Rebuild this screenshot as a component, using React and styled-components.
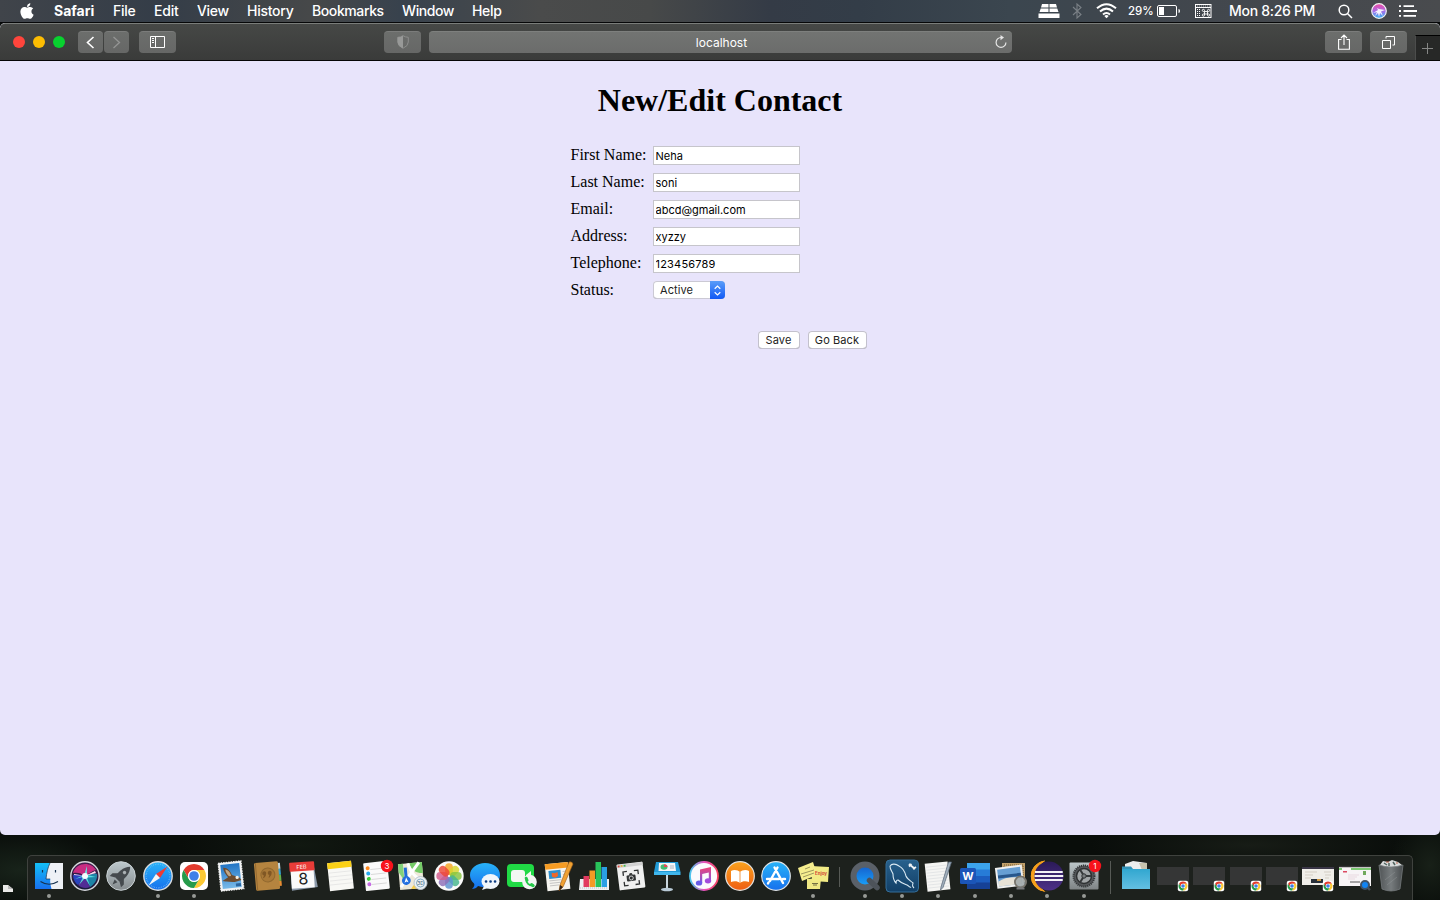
import React from "react";
import styled, { createGlobalStyle, css } from "styled-components";
import { FaApple } from "react-icons/fa";

const GlobalStyle = createGlobalStyle`
  * { box-sizing: border-box; }
  html, body { margin: 0; padding: 0; background: #0b0f0c; overflow: hidden; }
`;

const uiFont = css`
  font-family: Inter, "Liberation Sans", sans-serif;
`;

const Desktop = styled.div`
  width: 1440px;
  height: 900px;
  display: flex;
  flex-direction: column;
  background:
    radial-gradient(ellipse 90px 40px at 20px 870px, #18231a, transparent),
    radial-gradient(ellipse 120px 30px at 300px 845px, #111811, transparent),
    radial-gradient(ellipse 160px 26px at 1250px 845px, #171c16, transparent),
    radial-gradient(ellipse 40px 50px at 1430px 865px, #182018, transparent),
    #090d0a;
  ${uiFont}
`;

/* ---------- Menu bar ---------- */

const MenuBar = styled.header`
  flex: none;
  height: 23px;
  display: flex;
  align-items: center;
  padding: 0 23px 0 21px;
  border-bottom: 1px solid #060708;
  color: #fff;
  background: linear-gradient(
    90deg, #40444a 0, #343d48 160px, #464849 310px, #38424d 400px, #4a4b4b 540px,
    #474949 650px, #343b46 770px, #333d48 860px, #3b464f 1010px, #40464d 1150px, #494b4e 1440px
  );
  svg { display: block; }
`;

const AppleItem = styled.span`
  width: 33px;
  display: flex;
  padding-bottom: 1px;
`;

const MenuItem = styled.span`
  width: ${(p) => p.$width}px;
  font-size: 14px;
  line-height: 22px;
  font-weight: ${(p) => (p.$strong ? 700 : 500)};
  letter-spacing: ${(p) => p.$track || 0}px;
  white-space: nowrap;
`;

const StatusGroup = styled.div`
  margin-left: auto;
  display: flex;
  align-items: center;
`;

const StatusItem = styled.span`
  width: ${(p) => p.$width}px;
  margin-left: ${(p) => p.$gap || 0}px;
  display: flex;
  font-size: ${(p) => p.$size || 14}px;
  line-height: 22px;
  font-weight: 500;
  letter-spacing: ${(p) => p.$track || 0}px;
  white-space: nowrap;
`;

/* ---------- Browser window ---------- */

const BrowserWindow = styled.main`
  flex: none;
  height: 812px;
  display: flex;
  flex-direction: column;
  border-radius: 5px;
  overflow: hidden;
  background: #e8e4fb;
`;

const Toolbar = styled.div`
  flex: none;
  height: 38px;
  display: flex;
  align-items: flex-start;
  padding: 7px 0 0 13px;
  border-top: 1px solid #7a7d7a;
  border-bottom: 1px solid #050505;
  border-radius: 5px 5px 0 0;
  background: linear-gradient(#464846, #3a3b3a);
`;

const Lights = styled.div`
  display: flex;
  gap: 8px;
  padding-top: 5px;
  margin-right: 13px;
`;

const Light = styled.i`
  width: 12px;
  height: 12px;
  border-radius: 50%;
  background: ${(p) => p.$color};
`;

const ToolButton = styled.span`
  width: ${(p) => p.$width || 37}px;
  height: 22px;
  margin-left: ${(p) => p.$gap || 0}px;
  padding-bottom: 1px;
  display: flex;
  align-items: center;
  justify-content: center;
  border-radius: 4px;
  border-top: 1px solid #7b7c7b;
  background: linear-gradient(#6c6e6c, #666766);
`;

const AddressBar = styled.div`
  width: 583px;
  height: 22px;
  margin-left: 8px;
  padding: 0 5px 1px 17px;
  display: flex;
  align-items: center;
  border-radius: 4px;
  border-top: 1px solid #7e807e;
  background: linear-gradient(#727472, #6b6c6b);
  color: #fff;
  font-size: 12px;
  letter-spacing: 0;
`;

const Host = styled.span`
  flex: 1;
  text-align: center;
  padding-left: 2px;
`;

const NewTab = styled.span`
  width: 25px;
  height: 25px;
  margin: 4px 0 0 8px;
  padding-right: 2px;
  display: flex;
  align-items: center;
  justify-content: center;
  border-top: 1px solid #000;
  border-left: 1px solid #4c4d4c;
  background: #272827;
`;

/* ---------- Page ---------- */

const Page = styled.section`
  flex: 1;
  padding-top: 21px;
  font-family: "Liberation Serif", serif;
  color: #000;
`;

const Title = styled.h1`
  margin: 0 0 27px;
  text-align: center;
  font-size: 32px;
  line-height: 37px;
  font-weight: 700;
`;

const Form = styled.form`
  width: 296px;
  margin-left: 570.5px;
  display: flex;
  flex-direction: column;
  gap: 8px;
`;

const Field = styled.label`
  height: 19px;
  display: grid;
  grid-template-columns: 82.5px auto;
  justify-content: start;
  align-items: center;
  font-size: 16px;
  line-height: 18px;
`;

const FieldName = styled.span`
  white-space: nowrap;
  padding-bottom: 1px;
`;

const TextInput = styled.input`
  width: 147px;
  height: 19px;
  margin: 0;
  padding: 0 1.5px;
  border: 1px solid #c6c5cb;
  outline: 0;
  background: #fff;
  color: #000;
  font-size: 11px;
  letter-spacing: ${(p) => p.$track || 0}px;
  ${uiFont}
`;

const SelectBox = styled.span`
  width: 72px;
  height: 18px;
  margin-bottom: 1px;
  display: flex;
  justify-content: space-between;
  align-items: stretch;
  padding-left: 7px;
  border-radius: 4px;
  overflow: hidden;
  background: #fff;
  box-shadow: inset 0 0 0 1px #cbc9d4, inset 0 -1px 0 #aaa8b4;
  font-size: 11px;
  line-height: 18px;
  letter-spacing: 0.1px;
  color: #222;
  ${uiFont}
`;

const Stepper = styled.span`
  width: 15px;
  display: flex;
  align-items: center;
  justify-content: center;
  background: linear-gradient(#5a9df9, #1159f5);
`;

const Actions = styled.div`
  display: flex;
  justify-content: flex-end;
  gap: 8px;
  margin-top: 23px;
  padding-right: -0.5px;
`;

const PushButton = styled.button`
  width: ${(p) => p.$width}px;
  height: 18px;
  padding: 0;
  border: 0;
  border-radius: 4px;
  background: #fff;
  box-shadow: inset 0 0 0 1px #c3c1cd, inset 0 -1px 0 #a8a6b2;
  font-size: 11px;
  line-height: 18px;
  letter-spacing: 0.1px;
  color: #222;
  white-space: nowrap;
  ${uiFont}
`;

/* ---------- Dock ---------- */

const DockArea = styled.footer`
  flex: 1;
  display: flex;
  align-items: flex-end;
`;

const DesktopFile = styled.span`
  width: 27px;
  height: 15px;
  padding-left: 3px;
  svg { display: block; }
`;

const DockShelf = styled.div`
  width: 1386px;
  height: 45px;
  display: flex;
  padding-left: 2.4px;
  border: 1px solid #3f423e;
  border-bottom: 0;
  border-radius: 5px 5px 0 0;
  background: #1d211d;
`;

const DockSlot = styled.div`
  flex: none;
  width: 36.4px;
  display: flex;
  flex-direction: column;
  align-items: center;
  svg { display: block; overflow: visible; }
`;

const RunningDot = styled.i`
  width: 4px;
  height: 4px;
  border-radius: 50%;
  background: #969995;
`;

const DockDivider = styled.i`
  flex: none;
  width: 1px;
  height: ${(p) => p.$height}px;
  margin: ${(p) => p.$top}px 7.65px 0;
  background: #575a56;
`;

const ChromeMark = ({ r = 10 }) => (
  <g transform={`scale(${r / 10})`}>
    <circle r="10" fill="#fff" />
    <path d="M-8.66-5A10 10 0 0 1 8.66-5L0-5A5 5 0 0 0-4.33 2.5Z" fill="#e33b2e" />
    <path d="M8.66-5A10 10 0 0 1 0 10L4.33 2.5A5 5 0 0 0 0-5Z" fill="#fcc934" />
    <path d="M0 10A10 10 0 0 1-8.66-5L-4.33 2.5A5 5 0 0 0 4.33 2.5Z" fill="#269b4b" />
    <circle r="5" fill="#fff" />
    <circle r="4" fill="#3f7fe8" />
  </g>
);

const MiniChrome = () => (
  <g transform="translate(10 10)">
    <rect x="-5.2" y="-5.2" width="10.4" height="10.4" rx="2" fill="#fff" />
    <ChromeMark r={4.5} />
  </g>
);

const Num = ({ children, ...rest }) => (
  <text textAnchor="middle" fontFamily="Inter, sans-serif" {...rest}>{children}</text>
);

const Badge = ({ x, y, n }) => (
  <g>
    <circle cx={x} cy={y} r="6.2" fill="#f8121b" />
    <Num x={x} y={y + 2.8} fontSize="8" fill="#fff">{n}</Num>
  </g>
);

const DarkWindow = () => (
  <g>
    <rect x="-16" y="-9" width="32" height="18" fill="#353636" />
    <MiniChrome />
  </g>
);

const petals = ["#f6a623", "#d9d52c", "#86c440", "#45b68c", "#5c94d1", "#8c6fb8", "#d35c8c", "#ee4634"];

const icons = {
  finder: (
    <g>
      <rect x="-14" y="-13" width="28" height="26" fill="url(#finderBlue)" />
      <path d="M1-13H14V13H2.5C1.500 9 1 6 1.200 3H-3C-2.500-3-1-9 1-13Z" fill="#eef1f6" />
      <path d="M1-13C-1-9-2.500-3-3 3H1.200" fill="none" stroke="#17324f" strokeWidth=".7" />
      <path d="M-8.500 5.500Q0 11 9 5.500" fill="none" stroke="#17324f" strokeWidth="1.200" />
      <path d="M-6.500-6v2.500M6.500-6v2.500" stroke="#17324f" strokeWidth="1.200" />
    </g>
  ),
  siri: (
    <g>
      <circle r="14.2" fill="url(#siriDark)" stroke="#d5d7dc" strokeWidth="1.400" />
      <path d="M-12-3C-9-14 6-15 11-6 7-5 3-2 0 0-4-3-8-4-12-3Z" fill="#e02f8c" opacity=".85" />
      <path d="M-12-1C-8-2-4-1 0 0L-7 9C-10 7-12 3-12-1Z" fill="#2a4bd6" opacity=".85" />
      <path d="M0 0C4-2 8-3 12-2 13 3 9 9 5 11Z" fill="#1a9fc0" opacity=".8" />
      <path d="M0 0L5 11C1 13-4 12-7 9Z" fill="#5b2fa5" opacity=".85" />
      <path d="M0 0L-11-2-11-1ZM0 0L10-5 11-3Z" fill="#ffd5ef" />
      <path d="M-10 3L-1-1 2-10 2-1 11 1 2 1.500 5 10 0 2-6 9-2 1Z" fill="#5ff0e6" opacity=".85" />
      <circle r="3" fill="#fff" opacity=".95" />
    </g>
  ),
  launchpad: (
    <g>
      <circle r="14.300" fill="url(#padSilver)" stroke="#c8d0d3" />
      <g transform="rotate(45)" fill="#454a4e">
        <path d="M0-13C5-8 5 0 3 5H-3C-5 0-5-8 0-13Z" />
        <path d="M-3-1L-8 4V8L-3 5M3-1L8 4V8L3 5M-2 7H2L0 12Z" />
        <circle cy="-5" r="1.700" fill="#aab0b3" />
      </g>
    </g>
  ),
  safari: (
    <g>
      <circle r="14.2" fill="url(#skyBlue)" stroke="#d8dbdd" strokeWidth="1.400" />
      <circle r="11.8" fill="none" stroke="#a5d7f7" strokeWidth="1.200" strokeDasharray=".4 1.400" />
      <path d="M9.500-9.500L2 2-2-2Z" fill="#ef3b35" />
      <path d="M-9.500 9.500L2 2-2-2Z" fill="#f4f5f6" />
    </g>
  ),
  chrome: (
    <g>
      <rect x="-14" y="-14" width="28" height="28" rx="5" fill="#fff" />
      <ChromeMark r={12} />
    </g>
  ),
  mail: (
    <g transform="rotate(-6)">
      <rect x="-11.5" y="-14" width="23" height="28" fill="#f3f4f4" stroke="#f3f4f4" strokeWidth="1.2" strokeDasharray="1.5 1" />
      <rect x="-9.5" y="-12" width="19" height="24" fill="url(#stamp)" />
      <path d="M-7-9C-3-9 0-5 1-1L8 2 10 5 5 6C1 7-3 5-6 5L-9 4-3 1C-5-2-7-5-7-9Z" fill="#6d4c2f" />
      <path d="M-5-7C-2-6 0-3 0 0L-2 0C-4-2-5-5-5-7Z" fill="#c1a684" />
      <circle cx="6" cy="2" r="1.700" fill="#f3efe5" />
      <rect x="4" y="8" width="5" height="3" fill="#2a659f" />
    </g>
  ),
  contacts: (
    <g transform="rotate(-5)">
      <path d="M11-12h3v6h-3z" fill="#c5d7de" /><path d="M11-6h3v6h-3z" fill="#36a7d9" />
      <path d="M11 0h3v6h-3z" fill="#69b34c" /><path d="M11 6h3v5h-3z" fill="#e78c32" />
      <rect x="-12" y="-14" width="24" height="28" rx="1.5" fill="#b5843f" />
      <path d="M-10.500-14V14" stroke="#946a32" />
      <circle cx="1" cy="-1" r="7" fill="#a97938" stroke="#91682f" />
      <path d="M-4.500-3a2 2 0 1 1 4 0q0 3-3 5l-.6-.6q1-1 1-2.400-1.400 0-1.400-2ZM1-3a2 2 0 1 1 4 0q0 3-3 5l-.6-.6q1-1 1-2.400Q1-1 1-3Z" fill="#805724" />
    </g>
  ),
  calendar: (
    <g transform="rotate(-4)">
      <path d="M-12-13H11L14 12-12 14Z" fill="#8a98a8" />
      <rect x="-12" y="-13" width="23" height="25" fill="#fafafa" />
      <rect x="-13" y="-14" width="25" height="9" rx="1" fill="#e93c38" />
      <Num x="-1" y="-7.3" fontSize="5.5" fill="#fff">FEB</Num>
      <Num x="0" y="8.5" fontSize="16" fill="#222">8</Num>
    </g>
  ),
  notes: (
    <g transform="rotate(-6)">
      <rect x="-11.5" y="-14" width="24" height="28" fill="#f8f8f5" />
      <rect x="-11.5" y="-14" width="24" height="6" fill="#fbd117" />
      <path d="M-11-4h23M-11 0h23M-11 4h23M-11 8h23" stroke="#dedede" strokeWidth=".6" />
    </g>
  ),
  reminders: (
    <g>
      <g transform="rotate(-6)">
        <rect x="-11.5" y="-14" width="24" height="28" rx="1" fill="#fafafa" />
        <path d="M-5-7h15M-5-2h15M-5 3h15M-5 8h15" stroke="#ccc" strokeWidth=".7" />
        <circle cx="-7.5" cy="-8.5" r="2" fill="#ff8b20" /><circle cx="-7.5" cy="-3.2" r="2" fill="#26a9ef" />
        <circle cx="-7.5" cy="2.1" r="2" fill="#38cc38" /><circle cx="-7.5" cy="7.6" r="2" fill="#c66ce4" />
      </g>
      <Badge x={11} y={-10} n="3" />
    </g>
  ),
  maps: (
    <g>
      <g transform="rotate(-5)">
        <rect x="-13" y="-13" width="24" height="26" fill="#eee8d9" />
        <path d="M-2-13C0-5 6-2 11-2V-13Z" fill="#75cc67" /><path d="M-13-5V-13H-8V4Z" fill="#83d27b" />
        <path d="M-12 10L8-13M-3-13Q0 2 11 4" fill="none" stroke="#fff" strokeWidth="3" />
        <path d="M-2 13Q3 5 11 7V13Z" fill="#f5cb47" />
        <path d="M-6-9V5" stroke="#216ed6" strokeWidth="3" />
        <circle cx="-6" cy="4" r="4.4" fill="#246fdf" /><path d="M-6 1L-4 6-6 5-8 6Z" fill="#fff" />
      </g>
      <circle cx="8.5" cy="7" r="6.5" fill="#edf1f4" stroke="#bcc7cf" />
      <circle cx="8.5" cy="7" r="4" fill="none" stroke="#6999b8" strokeWidth=".8" />
      <Num x="8.5" y="9" fontSize="5" fill="#426378">3D</Num>
    </g>
  ),
  photos: (
    <g>
      <circle r="14.7" fill="#fafafa" />
      {petals.map((c, i) => (
        <rect key={c} x="-3.9" y="-12.7" width="7.8" height="11.7" rx="3.9" fill={c} opacity=".82" transform={`rotate(${i * 45})`} />
      ))}
    </g>
  ),
  messages: (
    <g>
      <path d="M0-13C9-13 15-8 15-1S9 11 0 11C-3 11-6 10.500-7 10 -8 12-11 13-13 13-11 11-10 9-11 7.500-14 5-15 2-15-1-15-8-8-13 0-13Z" fill="url(#skyBlue)" />
      <ellipse cx="5.500" cy="5.500" rx="9" ry="7.500" fill="#f1f6fb" /><path d="M-1 10L-3 14 3 12Z" fill="#f1f6fb" />
      <path d="M1 5.500h.1M5.500 5.500h.1M10 5.500h.1" stroke="#0b3b80" strokeWidth="2.600" strokeLinecap="round" />
    </g>
  ),
  facetime: (
    <g>
      <rect x="-15" y="-12" width="27" height="23" rx="4" fill="#20da45" />
      <rect x="-11" y="-6" width="14" height="12" rx="3" fill="#f3f8f3" /><path d="M4-1L9-5V5L4 2Z" fill="#f3f8f3" />
      <circle cx="7.500" cy="6" r="7.300" fill="#f4f6f5" />
      <path d="M4 2.500C4 7 7 10 11.500 9.500" fill="none" stroke="#25c84a" strokeWidth="1.800" />
      <path d="M4.200 2.200L5 4.200M11.200 9.700L9.500 8.500" stroke="#25c84a" strokeWidth="3" strokeLinecap="round" />
    </g>
  ),
  pages: (
    <g>
      <g transform="rotate(-6)">
        <rect x="-12" y="-13" width="23" height="27" fill="#f5f4ef" /><rect x="-12" y="-13" width="23" height="5.500" fill="#f59c24" />
        <rect x="-9" y="-6" width="12" height="8" fill="#2c8fcf" /><path d="M-6-4L-3-3 0-4 0 0-3 1.500-6 0Z" fill="#ef6829" />
        <path d="M-9 4H3M-9 6.500H2M-9 9H0M5-4h4M5-1h3" stroke="#bbb" strokeWidth=".8" />
      </g>
      <path d="M11-14L2 9 1 15 5 11 15-12Q14-15 11-14Z" fill="#f0a132" stroke="#9b5a18" strokeWidth=".6" /><path d="M2 9L1 15 5 11Z" fill="#32251b" />
    </g>
  ),
  numbers: (
    <g>
      <path d="M-14 3H15V14H-15Z" fill="#eef0f2" />
      <path d="M-14 12H14" stroke="#c2c4c8" strokeWidth="1" strokeDasharray="1 1" />
      <rect x="-10.500" y="0" width="5.500" height="11" fill="#e23b60" /><rect x="-4.500" y="-5.500" width="5.500" height="16.500" fill="#f39a25" />
      <rect x="1.500" y="-14" width="5.500" height="25" fill="#28c35a" /><rect x="7.500" y="-9" width="5.500" height="20" fill="#2a9fe5" />
    </g>
  ),
  screenshot: (
    <g transform="rotate(-7)">
      <rect x="-13" y="-13" width="26" height="26" rx="1" fill="#f0f0f0" />
      <path d="M-13-11H13" stroke="#d2d2d2" strokeWidth="3" />
      <path d="M-12-11h1.800" stroke="#e0483e" strokeWidth="1.800" /><path d="M-9-11h1.800" stroke="#e7b33d" strokeWidth="1.800" /><path d="M-6-11h1.800" stroke="#43b64c" strokeWidth="1.800" />
      <path d="M-7.500-1V-5H-3.500M3.500-5H7.500V-1M7.500 5V9H3.500M-3.500 9H-7.500V5" fill="none" stroke="#303233" strokeWidth="1.300" />
      <rect x="-4.500" y="-1" width="9" height="6" rx="1" fill="#303233" /><path d="M-2-1L-1-3H1L2-1Z" fill="#303233" />
      <circle cy="2" r="2" fill="none" stroke="#eee" strokeWidth=".8" />
    </g>
  ),
  keynote: (
    <g>
      <path d="M-1-2V13H1V-2Z" fill="#c9d6de" /><ellipse cy="13.500" rx="6" ry="1.700" fill="#b9cad6" />
      <path d="M-11-14H11L13.500-4H-13Z" fill="#219ad6" /><path d="M-13-4H13.500V-1H-13Z" fill="#40b7ed" />
      <path d="M-8-13H8L9-5H-8.500Z" fill="#f4f6f7" /><ellipse cx="-3" cy="-9" rx="3.500" ry="2.800" fill="#46bb72" /><path d="M-3-9V-11.800A3.500 3 0 0 1 .5-9Z" fill="#e8455c" />
      <path d="M3-10h4M3-8h4" stroke="#8e9fad" strokeWidth=".7" />
    </g>
  ),
  music: (
    <g>
      <circle r="14" fill="#fbfafd" stroke="url(#musicRing)" strokeWidth="1.800" />
      <path d="M-4 7V-6.500L7-9V4.500H4.800V-3.500L-1.800-2V7Z" fill="url(#musicNote)" />
      <ellipse cx="-5" cy="7" rx="3.200" ry="2.600" fill="#6a5be8" /><ellipse cx="4" cy="4.800" rx="3.200" ry="2.600" fill="#a34bdc" />
    </g>
  ),
  books: (
    <g>
      <circle r="14.300" fill="url(#orange)" stroke="#e5e1dd" strokeWidth="1.200" />
      <path d="M-9-5C-6-7-2-6 0-4 2-6 6-7 9-5V6C6 4.500 2 5 0 7-2 5-6 4.500-9 6Z" fill="#fff" /><path d="M0-4V7" stroke="#ed8d36" strokeWidth=".9" />
    </g>
  ),
  appstore: (
    <g>
      <circle r="14.300" fill="url(#skyBlue)" stroke="#e1e5e8" strokeWidth="1.200" />
      <path d="M1.500-8.500L-6 5M-1.500-8.500L7 7M-9 3H3M7 3H9M-7.500 6.500L-8 7.500" stroke="#fff" strokeWidth="2.400" strokeLinecap="round" />
    </g>
  ),
  stickies: (
    <g>
      <path d="M-6 3L8 2 7 13-6 13Z" fill="#efe784" /><path d="M-2-10L16-9 15 6-1 5Z" fill="#f2eb85" /><path d="M-15-8L0-14 4-1-11 5Z" fill="#f5ed8e" />
      <path d="M-8-7L-3-9M-12-2L1-6M-10 1L1-3" stroke="#777349" strokeWidth=".7" />
      <Num x="8" y="-1" fontSize="4.500" fontWeight="700" fill="#d34a35">Enjoy</Num>
      <path d="M-1 7.500H5M0 9H4" stroke="#555232" strokeWidth=".8" />
    </g>
  ),
  quicktime: (
    <g>
      <circle r="11.500" fill="url(#qtBlue)" stroke="#5a6068" strokeWidth="6" />
      <path d="M4.500 4.500L12 11.500" stroke="#4d535a" strokeWidth="5.500" strokeLinecap="round" />
    </g>
  ),
  workbench: (
    <g>
      <rect x="-16" y="-16" width="32.500" height="32" rx="4" fill="url(#wbBlue)" stroke="#356f9b" />
      <path d="M-12-10C-10-13-6-12-3-10 1-8 3-4 4 0 5 3 9 5 11 7 11 9 9 9 12 12M-12-10C-12-6-10-5-9-2-9 2-8 5-6 7-6 5-5 4-4 4-1 7 3 8 5 9 7 10 8 12 9 11" fill="none" stroke="#d8e8f2" strokeWidth="1.100" />
      <path d="M7-12L13-7M7-9.500L9.500-12M11-7L14-9" stroke="#eef2f5" strokeWidth="1.800" fill="none" />
    </g>
  ),
  textedit: (
    <g>
      <g transform="rotate(-6)">
        <rect x="-12" y="-13.500" width="23" height="28" fill="#f5f5f3" />
        <path d="M-11-10H10M-11-7H10M-11-4H10M-11-1H10M-11 2H10M-11 5H10M-11 8H10M-11 11H10" stroke="#d3d7da" strokeWidth=".5" />
      </g>
      <path d="M10.500-14L3 11 2.500 14 5 11.500 13.500-14Z" fill="#a3b1be" stroke="#536172" strokeWidth=".7" />
    </g>
  ),
  word: (
    <g>
      <rect x="-8" y="-13" width="23" height="7" fill="#3ca4ec" /><rect x="-8" y="-6.500" width="23" height="7" fill="#277cd7" />
      <rect x="-8" y="0" width="23" height="7" fill="#1c5dbf" /><rect x="-8" y="6.500" width="23" height="6.500" fill="#164196" />
      <rect x="-15" y="-8" width="16" height="16" rx="1.500" fill="#1b55b8" />
      <Num x="-7" y="4" fontSize="11" fontWeight="700" fill="#fff">W</Num>
    </g>
  ),
  preview: (
    <g>
      <rect x="-9" y="-13" width="23" height="19" fill="#c2a06a" /><rect x="-7" y="-11" width="19" height="15" fill="none" stroke="#6e562f" strokeDasharray="1 1" />
      <g transform="rotate(-7)">
        <rect x="-15" y="-10" width="27" height="21" fill="#f0f0ef" /><rect x="-13" y="-8" width="23" height="17" fill="#679fd3" />
        <path d="M-13 4Q-4-1 10 3V9H-13Z" fill="#e7e2d6" /><path d="M-13-.5H10" stroke="#28578c" strokeWidth="3" />
      </g>
      <circle cx="9.500" cy="6" r="5.600" fill="#9ca4a6" fillOpacity=".85" stroke="#77746c" strokeWidth="1.800" /><path d="M5.500 12.500H13.500" stroke="#77787a" strokeWidth="2" />
    </g>
  ),
  eclipse: (
    <g>
      <path d="M-3-15A15.300 15.300 0 0 0-3 15.300L2 15V-15Z" fill="#f39b22" />
      <circle cx="0" r="15.200" fill="#1d211d" />
      <path d="M-2.500-15A15.300 15.300 0 0 0-2.500 15.300Q-13 8-13 0T-2.500-15Z" fill="#f7a01c" stroke="#f7a01c" strokeWidth="1" />
      <circle cx="2" r="14.500" fill="url(#eclipse)" />
      <path d="M-12-4H15.700M-12.500 0H16.200M-12 4H15.700" stroke="#f3f1f6" strokeWidth="1.900" />
    </g>
  ),
  settings: (
    <g>
      <rect x="-14.500" y="-13.500" width="29" height="27" rx="1" fill="url(#silver)" />
      <circle r="10.500" fill="#55585b" stroke="#333638" strokeWidth="2" strokeDasharray="1.200 .8" />
      <circle r="7.500" fill="#a0a4a6" stroke="#2e3132" strokeWidth="1.500" />
      <path d="M0 0L-4-6.500M0 0H7.500M0 0L-4 6.500" stroke="#35383a" strokeWidth="2" /><circle r="2.200" fill="#777b7d" stroke="#303335" />
      <Badge x={11} y={-10} n="1" />
    </g>
  ),
  folder: (
    <g>
      <path d="M-11-12L-3-15 11-13V-5H-11Z" fill="#eee" /><path d="M3-13H11V-6H6Z" fill="#c7c4af" />
      <path d="M-14-9.500H-5L-3-7H14V12H-14Z" fill="#3393b8" /><rect x="-14" y="-7" width="28" height="20" fill="url(#folderBlue)" />
    </g>
  ),
  darkWindow: <DarkWindow />,
  pageChrome: (
    <g>
      <rect x="-16" y="-8" width="32" height="17" fill="#f0eee9" /><path d="M-16-8H16" stroke="#3a3647" strokeWidth="2" />
      <path d="M-13-4h12M-13-1h8M-13 2h6M6-4h7M7-1h6M7 2h4" stroke="#d3cdc3" strokeWidth="1" />
      <rect x="-7" y="3" width="12" height="4" fill="#28303a" /><rect x="-1" y="3" width="4" height="2" fill="#d19b42" /><MiniChrome />
    </g>
  ),
  pageQuick: (
    <g>
      <rect x="-16" y="-9" width="32" height="19" fill="#f7f4f6" /><path d="M-16-9.500H16" stroke="#333" strokeWidth="1.500" />
      <path d="M-16-7H-13M-4-7H16" stroke="#54b947" strokeWidth="1.500" />
      <rect x="-12" y="-5" width="4" height="1.500" fill="#dc4962" /><path d="M-7-1h11M-7 1h9M-7 3h7" stroke="#e9d9e0" strokeWidth="1" />
      <rect x="8" y="-5" width="3" height="4" fill="#71a95c" /><path d="M-5 6H5" stroke="#555" />
      <path d="M11 10L15 14" stroke="#4b5158" strokeWidth="2.400" /><circle cx="10" cy="9" r="4" fill="#1284f3" stroke="#3e5269" strokeWidth="2" />
    </g>
  ),
  trash: (
    <g>
      <path d="M-11-11L-8-15-3-14 1-16 7-14 11-11V-8H-11Z" fill="#d8dbdb" />
      <path d="M-7-13L-4-11M2-14L4-11M-2-13V-10" stroke="#53645f" strokeWidth="1.500" /><path d="M-5-14h3M5-13h2" stroke="#bd6651" />
      <path d="M-12-11Q0-7 12-11L9 13Q0 17-9 13Z" fill="url(#trashMetal)" stroke="#757a7c" strokeWidth=".8" />
      <path d="M-6 4L4-4M-4 9L6 1" stroke="#969b9c" strokeWidth=".7" opacity=".6" />
    </g>
  ),
};

const leftDock = [
  ["finder", 1], ["siri"], ["launchpad"], ["safari", 1], ["chrome", 1], ["mail"], ["contacts"], ["calendar"],
  ["notes"], ["reminders"], ["maps"], ["photos"], ["messages"], ["facetime"], ["pages"], ["numbers"],
  ["screenshot"], ["keynote"], ["music"], ["books"], ["appstore"], ["stickies", 1],
];
const middleDock = [["quicktime", 1], ["workbench", 1], ["textedit", 1], ["word", 1], ["preview", 1], ["eclipse", 1], ["settings", 1]];
const rightDock = [["folder"], ["darkWindow"], ["darkWindow"], ["darkWindow"], ["darkWindow"], ["pageChrome"], ["pageQuick"], ["trash"]];

const DockIcons = ({ items }) =>
  items.map(([name, running], i) => (
    <DockSlot key={name + i}>
      <svg width="36" height="38" viewBox="-18 -20 36 38">{icons[name]}</svg>
      {running && <RunningDot />}
    </DockSlot>
  ));

const Gradient = ({ id, stops, horizontal }) => (
  <linearGradient id={id} x1="0" y1="0" x2={horizontal ? 1 : 0} y2={horizontal ? 0 : 1}>
    {stops.map((c, i) => <stop key={i} offset={i / (stops.length - 1)} stopColor={c} />)}
  </linearGradient>
);

const DockPaints = () => (
  <svg width="0" height="0">
    <defs>
      <Gradient id="finderBlue" stops={["#14c0f8", "#1870ee"]} />
      <Gradient id="siriDark" stops={["#471d4e", "#161b3a"]} />
      <Gradient id="silver" stops={["#bcc6c9", "#7f8486"]} />
      <Gradient id="padSilver" stops={["#bdc9cd", "#868c8f"]} />
      <Gradient id="skyBlue" stops={["#28b3f8", "#1670ed"]} />
      <Gradient id="stamp" stops={["#2275c5", "#77b9e8"]} />
      <Gradient id="musicRing" stops={["#4bc8ef", "#e651bb", "#f84664"]} horizontal />
      <Gradient id="musicNote" stops={["#f24276", "#7657e9"]} />
      <Gradient id="orange" stops={["#fba21d", "#ef5e13"]} />
      <Gradient id="qtBlue" stops={["#155bc8", "#19a7ff"]} />
      <Gradient id="wbBlue" stops={["#28618d", "#123f66"]} />
      <Gradient id="eclipse" stops={["#2b1a58", "#4d3187"]} />
      <Gradient id="folderBlue" stops={["#31a7d0", "#64bfe2"]} />
      <Gradient id="trashMetal" stops={["#515557", "#777c7e", "#484c4e"]} horizontal />
      <Gradient id="siriMenu" stops={["#f0489f", "#a86ce8", "#2fb5f5"]} />
    </defs>
  </svg>
);

const fields = [
  ["First Name:", "Neha", 0],
  ["Last Name:", "soni", 0],
  ["Email:", "abcd@gmail.com", 0],
  ["Address:", "xyzzy", 0],
  ["Telephone:", "123456789", 0.2],
];

export default function App() {
  return (
    <Desktop>
      <GlobalStyle />
      <MenuBar>
        <AppleItem><FaApple size={18} style={{ marginLeft: -3 }} /></AppleItem>
        <MenuItem $width={59} $strong $track={0}>Safari</MenuItem>
        <MenuItem $width={41} $track={-0.25}>File</MenuItem>
        <MenuItem $width={43} $track={-0.2}>Edit</MenuItem>
        <MenuItem $width={50} $track={-0.35}>View</MenuItem>
        <MenuItem $width={65} $track={-0.25}>History</MenuItem>
        <MenuItem $width={90} $track={-0.4}>Bookmarks</MenuItem>
        <MenuItem $width={70} $track={-0.4}>Window</MenuItem>
        <MenuItem $width={40} $track={-0.3}>Help</MenuItem>
        <StatusGroup>
          <StatusItem $width={22}>
            <svg width="22" height="16" viewBox="0 0 22 16" fill="#fff">
              <path d="M4 1H10.500V4.500H3Z M11.500 1H18L19 4.500H11.500Z M2.700 5.500H10.500V9H1.500Z M11.500 5.500H19.300L20.500 9H11.500Z M.5 10.500H21.500V15H.5Z" />
            </svg>
          </StatusItem>
          <StatusItem $width={10} $gap={12}>
            <svg width="10" height="16" viewBox="0 0 10 16" fill="none" stroke="#7a8086" strokeWidth="1.100">
              <path d="M1 4L9 11.500 5 15V1L9 4.500 1 12" />
            </svg>
          </StatusItem>
          <StatusItem $width={21} $gap={14}>
            <svg width="21" height="16" viewBox="0 0 21 16" fill="none" stroke="#fff" strokeWidth="2">
              <path d="M1 5.300Q10.500-2.900 20 5.300M4 8.500Q10.500 2.700 17 8.500M7 11.500Q10.500 8.500 14 11.500" /><path d="M8.300 12.900Q10.500 11.200 12.700 12.900L10.500 15.200Z" fill="#fff" stroke="none" />
            </svg>
          </StatusItem>
          <StatusItem $width={26} $gap={11} $size={11.5} $track={-0.1}>29%</StatusItem>
          <StatusItem $width={24} $gap={3}>
            <svg width="24" height="12" viewBox="0 0 24 12">
              <rect x=".5" y=".5" width="19" height="11" rx="1.500" fill="none" stroke="#fff" /><rect x="2" y="2" width="5" height="8" fill="#fff" /><path d="M21.500 4Q23 4 23 6T21.500 8Z" fill="#fff" />
            </svg>
          </StatusItem>
          <StatusItem $width={17} $gap={14}>
            <svg width="17" height="14" viewBox="0 0 17 14">
              <rect x=".5" y=".5" width="15.500" height="13" fill="none" stroke="#fff" /><path d="M0 3.500H16" stroke="#fff" /><path d="M2 2H15" stroke="#fff" strokeDasharray="1 1" opacity=".6" />
              <path d="M2 5.500H6M2 7.500H6M2 9.500H6M2 11.500H6" stroke="#fff" strokeDasharray="1 1" />
              <path d="M9.500 7.500H12.500V10H9.500ZM9.500 7.500V6.300A1.100 1.100 0 1 0 8.300 7.500ZM12.500 7.500V6.300A1.100 1.100 0 1 1 13.700 7.500ZM9.500 10V11.200A1.100 1.100 0 1 1 8.300 10ZM12.500 10V11.200A1.100 1.100 0 1 0 13.700 10Z" fill="none" stroke="#fff" strokeWidth=".9" />
            </svg>
          </StatusItem>
          <StatusItem $width={87} $gap={17} $size={14} $track={-0.3}>Mon 8:26 PM</StatusItem>
          <StatusItem $width={15} $gap={22}>
            <svg width="15" height="15" viewBox="0 0 15 15" fill="none" stroke="#fff" strokeWidth="1.500"><circle cx="6" cy="6" r="4.800" /><path d="M9.500 9.500L14 14" /></svg>
          </StatusItem>
          <StatusItem $width={16} $gap={18}>
            <svg width="16" height="16" viewBox="-8 -8 16 16">
              <circle r="7.300" fill="url(#siriMenu)" stroke="#f2f2f4" strokeWidth="1.200" />
              <path d="M-6 2L-1-1-2-3 0-2 6-1 2 .5 4 5 1 2 0 6-1 2-4 5-2 1Z" fill="#fff" opacity=".9" />
            </svg>
          </StatusItem>
          <StatusItem $width={18} $gap={12}>
            <svg width="18" height="12" viewBox="0 0 18 12" stroke="#fff" strokeWidth="1.800"><path d="M0 1.200H2M0 6H2M0 10.800H2M4.500 1.200H15M4.500 6H18M4.500 10.800H17" /></svg>
          </StatusItem>
        </StatusGroup>
      </MenuBar>

      <BrowserWindow>
        <Toolbar>
          <Lights><Light $color="#ff453c" /><Light $color="#fdbd02" /><Light $color="#08d22f" /></Lights>
          <ToolButton $width={25}>
            <svg width="9" height="13" viewBox="0 0 9 13" fill="none" stroke="#fff" strokeWidth="1.600"><path d="M7.500 1L1.500 6.500 7.500 12" /></svg>
          </ToolButton>
          <ToolButton $width={25} $gap={1}>
            <svg width="9" height="13" viewBox="0 0 9 13" fill="none" stroke="#949594" strokeWidth="1.300"><path d="M1.500 1L7.500 6.500 1.500 12" /></svg>
          </ToolButton>
          <ToolButton $gap={10}>
            <svg width="15" height="12" viewBox="0 0 15 12" fill="none" stroke="#fff"><path d="M.5.5H14.500V11.500H.5ZM5.500.5V11.500M2 2.500H4M2 4.500H4M2 6.500H4" /></svg>
          </ToolButton>
          <ToolButton $gap={208}>
            <svg width="12" height="14" viewBox="0 0 12 14"><path d="M6 .7Q8.500 2.300 11.300 2.300V7Q11.300 11 6 13.300Q.7 11 .7 7V2.300Q3.500 2.300 6 .7Z" fill="none" stroke="#8c8d8c" /><path d="M6 .7V13.300Q.7 11 .7 7V2.300Q3.500 2.300 6 .7Z" fill="#989998" /></svg>
          </ToolButton>
          <AddressBar>
            <Host>localhost</Host>
            <svg width="12" height="14" viewBox="0 0 12 14" fill="none" stroke="#e6e6e6" strokeWidth="1.200"><path d="M6 2.500A4.900 4.900 0 1 0 10.900 7.400" /><path d="M5.500 0L9 2.500 5.500 5.300Z" fill="#e6e6e6" stroke="none" /></svg>
          </AddressBar>
          <ToolButton $gap={313}>
            <svg width="12" height="16" viewBox="0 0 12 16" fill="none" stroke="#fff" strokeWidth="1.100"><path d="M3.500 5.500H.6V15.300H11.400V5.500H8.500M6 11V1M3 4L6 1 9 4" /></svg>
          </ToolButton>
          <ToolButton $gap={8}>
            <svg width="13" height="13" viewBox="0 0 13 13" fill="none" stroke="#fff"><path d="M.5 4.500H8.500V12.500H.5ZM4 2.500V.5H12.500V9H10.500" /></svg>
          </ToolButton>
          <NewTab>
            <svg width="11" height="11" viewBox="0 0 11 11" stroke="#858685"><path d="M0 5.500H11M5.500 0V11" /></svg>
          </NewTab>
        </Toolbar>
        <Page>
          <Title>New/Edit Contact</Title>
          <Form>
            {fields.map(([name, value, track]) => (
              <Field key={name}><FieldName>{name}</FieldName><TextInput defaultValue={value} $track={track} spellCheck={false} /></Field>
            ))}
            <Field as="div">
              <FieldName>Status:</FieldName>
              <SelectBox>
                Active
                <Stepper>
                  <svg width="7" height="11" viewBox="0 0 7 11" fill="none" stroke="#fff" strokeWidth="1.200"><path d="M.7 3.700L3.500 1 6.300 3.700M.7 7.300L3.500 10 6.300 7.300" /></svg>
                </Stepper>
              </SelectBox>
            </Field>
            <Actions>
              <PushButton type="button" $width={42}>Save</PushButton>
              <PushButton type="button" $width={59}>Go Back</PushButton>
            </Actions>
          </Form>
        </Page>
      </BrowserWindow>

      <DockArea>
        <DesktopFile>
          <svg width="11" height="7" viewBox="0 0 11 7"><path d="M0 0H5L10 4V7H0Z" fill="#e9e9e7" /><path d="M5 0V4H10Z" fill="#bbb" /></svg>
        </DesktopFile>
        <DockShelf>
          <DockIcons items={leftDock} />
          <DockDivider $height={20} $top={11} />
          <DockIcons items={middleDock} />
          <DockDivider $height={33} $top={5} />
          <DockIcons items={rightDock} />
        </DockShelf>
        <DockPaints />
      </DockArea>
    </Desktop>
  );
}
